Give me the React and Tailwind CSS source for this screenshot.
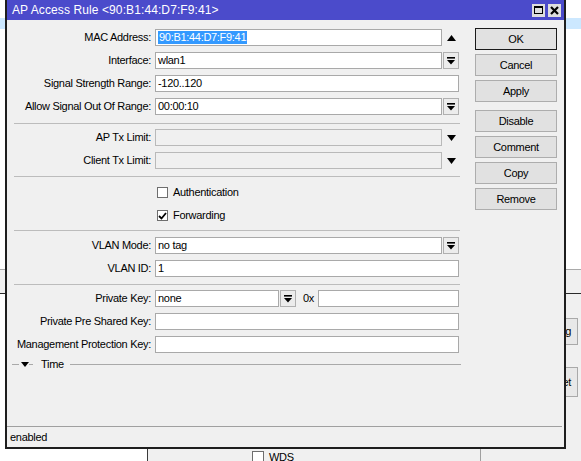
import React from 'react';

// kleines Dropdown-Symbol (Balken + Dreieck), wie in Winbox
const DropGlyph = () => (
  <svg width="8" height="8" viewBox="0 0 8 8">
    <rect x="0" y="0" width="8" height="1.6" fill="#000" />
    <polygon points="0,3 8,3 4,7.5" fill="#000" />
  </svg>
);

const Tri = ({ up }) => (
  <svg width="9" height="6" viewBox="0 0 9 6">
    {up ? <polygon points="0,6 9,6 4.5,0" fill="#000" /> : <polygon points="0,0 9,0 4.5,6" fill="#000" />}
  </svg>
);

const Label = ({ children }) => (
  <div className="w-[141px] shrink-0 text-right pr-[4px] whitespace-nowrap">{children}</div>
);

const Input = ({ value, selected, disabled, className = '' }) => (
  <div
    className={`h-[17px] border flex items-center pl-[2px] whitespace-nowrap overflow-hidden ${
      disabled ? 'bg-[#f0f0f0] border-[#b9b9b9]' : 'bg-white border-[#a9a9a9]'
    } ${className}`}
  >
    {selected ? <span className="bg-[#3399ff] text-white leading-[13px] px-[1px]">{value}</span> : value}
  </div>
);

const DropBtn = () => (
  <div className="w-[16px] h-[17px] ml-[1px] border border-[#b0b0b0] bg-[#ececec] flex items-center justify-center">
    <DropGlyph />
  </div>
);

const Row = ({ label, children, className = '' }) => (
  <div className={`flex items-center h-[17px] ${className}`}>
    <Label>{label}</Label>
    {children}
  </div>
);

const Sep = ({ className = '' }) => <div className={`h-px bg-[#bcbcbc] w-[446px] ${className}`} />;

const Check = ({ label, checked }) => (
  <div className="flex items-center h-[23px] pl-[143px]">
    <div className="w-[11px] h-[11px] border border-[#6e6e6e] bg-white flex items-center justify-center">
      {checked && (
        <svg width="9" height="8" viewBox="0 0 9 8">
          <path d="M1 4 L3.5 6.5 L8 1" stroke="#000" strokeWidth="1.8" fill="none" />
        </svg>
      )}
    </div>
    <span className="ml-[5px]">{label}</span>
  </div>
);

const Btn = ({ children, primary, className = '' }) => (
  <div
    className={`h-[22px] flex items-center justify-center bg-[#e1e1e1] border ${
      primary ? 'border-[#1a1a1a]' : 'border-[#adadad]'
    } ${className}`}
  >
    {children}
  </div>
);

const App = () => {
  return (
    <div className="relative w-[581px] h-[461px] overflow-hidden bg-[#f0f0f0] text-black text-[11px] tracking-[-0.3px] font-['Liberation_Sans',Arial,sans-serif]">
      {/* Hintergrund: Liste oben */}
      <div className="absolute left-0 top-0 w-full h-[270px] bg-white border-b border-[#a9a9a9]">
        <div className="mt-[18px] h-[11px] bg-[#cce8ff]" />
      </div>

      {/* Hintergrund: zweites Fenster unten */}
      <div className="absolute left-0 top-[293px] w-full h-[168px] bg-[#f0f0f0] border-t border-[#2a2a2a]">
        <div className="absolute left-0 top-0 w-[148px] h-full bg-white border-r border-[#3a3a3a]" />
        <div className="absolute left-[480px] top-0 w-px h-full bg-[#a0a0a0]" />
        <div className="absolute left-[498px] top-[24px] w-[80px] h-[27px] border border-[#a9a9a9] bg-[#e8e8e8] flex items-center justify-end pr-[6px]">
          Setting
        </div>
        <div className="absolute left-[498px] top-[73px] w-[80px] h-[30px] border border-[#a9a9a9] bg-[#e8e8e8] flex items-center justify-end pr-[6px]">
          Reset
        </div>
        <div className="absolute left-[252px] top-[155px] flex items-center">
          <div className="w-[12px] h-[12px] border border-[#6e6e6e] bg-white" />
          <span className="ml-[5px]">WDS</span>
        </div>
      </div>

      {/* Dialog */}
      <div className="absolute left-[5px] top-0 w-[561px] h-[449px] flex flex-col bg-[#f0f0f0] border-x-2 border-b-2 border-[#1e1e1e]">
        {/* Titelleiste */}
        <div className="h-[20px] shrink-0 bg-[#4b4bcb] flex items-center justify-between pl-[5px] pr-[3px]">
          <span className="text-white text-[12px] tracking-[0.1px]">AP Access Rule &lt;90:B1:44:D7:F9:41&gt;</span>
          <div className="flex gap-[3px]">
            <div className="w-[13px] h-[13px] bg-[#dedede] flex items-center justify-center">
              <div className="w-[9px] h-[8px] border border-black border-t-2" />
            </div>
            <div className="w-[13px] h-[13px] bg-[#dedede] flex items-center justify-center">
              <svg width="9" height="9" viewBox="0 0 9 9">
                <path d="M1 1 L8 8 M8 1 L1 8" stroke="#000" strokeWidth="2.2" />
              </svg>
            </div>
          </div>
        </div>

        <div className="flex flex-1">
          {/* Formular */}
          <div className="w-[454px] pl-[7px] pt-[9px] flex flex-col">
            <Row label="MAC Address:">
              <Input value="90:B1:44:D7:F9:41" selected className="w-[287px]" />
              <div className="w-[17px] ml-[1px] flex justify-center">
                <Tri up />
              </div>
            </Row>
            <Row label="Interface:" className="mt-[6px]">
              <Input value="wlan1" className="w-[287px]" />
              <DropBtn />
            </Row>
            <Row label="Signal Strength Range:" className="mt-[6px]">
              <Input value="-120..120" className="w-[304px]" />
            </Row>
            <Row label="Allow Signal Out Of Range:" className="mt-[6px]">
              <Input value="00:00:10" className="w-[287px]" />
              <DropBtn />
            </Row>

            <Sep className="mt-[8px]" />

            <Row label="AP Tx Limit:" className="mt-[5px]">
              <Input disabled className="w-[287px]" />
              <div className="w-[17px] ml-[1px] flex justify-center">
                <Tri />
              </div>
            </Row>
            <Row label="Client Tx Limit:" className="mt-[6px]">
              <Input disabled className="w-[287px]" />
              <div className="w-[17px] ml-[1px] flex justify-center">
                <Tri />
              </div>
            </Row>

            <Sep className="mt-[7px]" />

            <div className="mt-[4px]">
              <Check label="Authentication" />
              <Check label="Forwarding" checked />
            </div>

            <Sep className="mt-[3px]" />

            <Row label="VLAN Mode:" className="mt-[6px]">
              <Input value="no tag" className="w-[287px]" />
              <DropBtn />
            </Row>
            <Row label="VLAN ID:" className="mt-[6px]">
              <Input value="1" className="w-[304px]" />
            </Row>

            <Sep className="mt-[7px]" />

            <Row label="Private Key:" className="mt-[5px]">
              <Input value="none" className="w-[124px]" />
              <DropBtn />
              <span className="ml-[7px] w-[14px]">0x</span>
              <Input className="w-[141px] ml-[1px]" />
            </Row>
            <Row label="Private Pre Shared Key:" className="mt-[6px]">
              <Input className="w-[304px]" />
            </Row>
            <Row label="Management Protection Key:" className="mt-[6px]">
              <Input className="w-[304px]" />
            </Row>

            <div className="flex items-center h-[14px] mt-[4px] -ml-[2px]">
              <div className="w-[7px] h-px bg-[#a9a9a9]" />
              <div className="ml-[2px]">
                <svg width="8" height="5" viewBox="0 0 8 5">
                  <polygon points="0,0 8,0 4,5" fill="#000" />
                </svg>
              </div>
              <div className="w-[4px] h-px bg-[#a9a9a9]" />
              <span className="ml-[8px]">Time</span>
              <div className="flex-1 ml-[6px] h-px bg-[#a9a9a9]" />
            </div>
          </div>

          {/* Schaltflächen */}
          <div className="ml-[14px] w-[82px] pt-[8px] flex flex-col gap-[4px]">
            <Btn primary>OK</Btn>
            <Btn>Cancel</Btn>
            <Btn>Apply</Btn>
            <Btn className="mt-[4px]">Disable</Btn>
            <Btn>Comment</Btn>
            <Btn>Copy</Btn>
            <Btn>Remove</Btn>
          </div>
        </div>

        {/* Statusleiste */}
        <div className="h-[21px] shrink-0 mr-[2px] border-t border-[#a0a0a0] flex items-center pl-[3px]">
          enabled
        </div>
      </div>
    </div>
  );
};

export default App;
